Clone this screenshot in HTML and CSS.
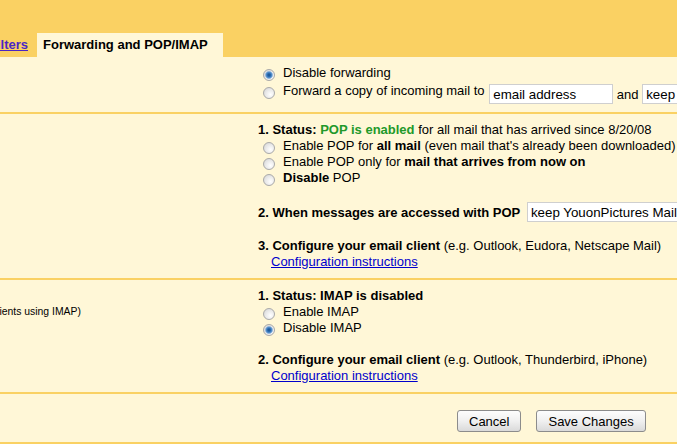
FILE: index.html
```html
<!DOCTYPE html>
<html lang="en">
<head>
<meta charset="utf-8">
<title>Settings - Forwarding and POP/IMAP</title>
<link rel="stylesheet" href="styles.css">
</head>
<body>
<div class="page">
  <nav class="tabbar">
    <a class="tab-link" href="#">Filters</a>
    <div class="tab-active">Forwarding and POP/IMAP</div>
  </nav>

  <div class="settings">
    <section class="row row-fwd">
      <div class="label"><b>Forwarding:</b></div>
      <div class="opts">
        <label class="line"><input class="radio" type="radio" name="fwd" checked><span>Disable forwarding</span></label>
        <div class="line line-field">
          <label class="inline"><input class="radio" type="radio" name="fwd"><span>Forward a copy of incoming mail to</span></label>
          <input class="field field-email" type="text" value="email address">
          and
          <select class="field field-sel"><option>keep YouonPictures Mail's copy in the Inbox</option></select>
        </div>
      </div>
    </section>

    <section class="row row-pop">
      <div class="label"><b>POP Download:</b></div>
      <div class="opts">
        <div class="block">
          <div class="line"><b>1. Status: <span class="ok">POP is enabled</span></b> for all mail that has arrived since 8/20/08</div>
          <label class="line"><input class="radio" type="radio" name="pop"><span>Enable POP for <b>all mail</b> (even mail that's already been downloaded)</span></label>
          <label class="line"><input class="radio" type="radio" name="pop"><span>Enable POP only for <b>mail that arrives from now on</b></span></label>
          <label class="line"><input class="radio" type="radio" name="pop"><span><b>Disable</b> POP</span></label>
        </div>
        <div class="block block-when">
          <div class="line line-select"><b>2. When messages are accessed with POP</b>
            <select class="field field-sel field-pop"><option>keep YouonPictures Mail's copy in the Inbox</option></select>
          </div>
        </div>
        <div class="block block-gap">
          <div class="line"><b>3. Configure your email client</b> (e.g. Outlook, Eudora, Netscape Mail)</div>
          <div class="line link-line"><a href="#">Configuration instructions</a></div>
        </div>
      </div>
    </section>

    <section class="row row-imap">
      <div class="label">
        <div class="line"><b>IMAP Access:</b></div>
        <div class="desc">(access Gmail from other clients using IMAP)</div>
      </div>
      <div class="opts">
        <div class="block">
          <div class="line"><b>1. Status: IMAP is disabled</b></div>
          <label class="line"><input class="radio" type="radio" name="imap"><span>Enable IMAP</span></label>
          <label class="line"><input class="radio" type="radio" name="imap" checked><span>Disable IMAP</span></label>
        </div>
        <div class="block block-gap">
          <div class="line"><b>2. Configure your email client</b> (e.g. Outlook, Thunderbird, iPhone)</div>
          <div class="line link-line"><a href="#">Configuration instructions</a></div>
        </div>
      </div>
    </section>

    <section class="row row-actions">
      <div class="label"></div>
      <div class="actions">
        <button class="btn" type="button">Cancel</button>
        <button class="btn" type="button">Save Changes</button>
      </div>
    </section>
  </div>
</div>
</body>
</html>
```

FILE: styles.css
```css
html, body {
  margin: 0;
  padding: 0;
}

body {
  background: #fad163;
  color: #000;
  font-family: "Liberation Sans", Arial, sans-serif;
  font-size: 13px;
  line-height: 16px;
  overflow: hidden;
  height: 444px;
}

.page {
  margin-left: -137px;
  width: 1100px;
}

/* Tabs */
.tabbar {
  display: flex;
  align-items: flex-end;
  gap: 3px;
  height: 57px;
  padding-left: 120px;
  box-sizing: border-box;
}

.tab-link {
  padding: 0 6px;
  line-height: 24px;
  font-weight: bold;
  color: #4a26c4;
  text-decoration: underline;
}

.tab-active {
  background: #fff7d7;
  font-weight: bold;
  line-height: 24px;
  height: 24px;
  width: 186px;
  box-sizing: border-box;
  padding-left: 6px;
  white-space: nowrap;
}

/* Rows */
.row {
  display: grid;
  grid-template-columns: 395px 1fr;
  background: #fff7d7;
  border-bottom: 2px solid #fad163;
  padding: 8px 0;
}

.label {
  padding-left: 10px;
}

.desc {
  font-size: 10.4px;
  line-height: 16px;
  white-space: nowrap;
}

.opts {
  white-space: nowrap;
}

.line {
  display: block;
  height: 16px;
}

label.line {
  display: flex;
  align-items: center;
}

.inline {
  display: inline-flex;
  align-items: center;
}

.line-field {
  height: auto;
  padding-top: 2px;
}

.line-select {
  height: auto;
}

.block-when {
  margin-top: 16px;
}

.block-gap {
  margin-top: 16px;
}

.ok {
  color: #22992a;
}

.link-line {
  padding-left: 13px;
}

a {
  color: #0000cc;
}

/* Radio buttons (XP-like) */
.radio {
  -webkit-appearance: none;
  appearance: none;
  box-sizing: border-box;
  width: 12px;
  height: 12px;
  margin: 3px 8px 0 5px;
  border: 1px solid #a9a9a9;
  border-radius: 50%;
  background: radial-gradient(circle at 65% 65%, #ffffff 0%, #ececec 45%, #d2d2d2 100%);
  flex: none;
}

.radio:checked {
  background:
    radial-gradient(circle at 50% 50%, #174f8a 0, #2b6bb0 1.6px, #5d95cf 3px, rgba(140, 180, 220, 0.6) 3.8px, rgba(255, 255, 255, 0) 4.3px),
    radial-gradient(circle at 65% 65%, #ffffff 0%, #ececec 45%, #d2d2d2 100%);
}

/* Fields */
.field {
  box-sizing: border-box;
  height: 20px;
  border: 1px solid #cfcfcf;
  background: #fff;
  font-family: "Liberation Sans", Arial, sans-serif;
  font-size: 13.33px;
  color: #000;
  margin: 0;
  vertical-align: baseline;
}

.field-email {
  width: 124px;
  padding: 0 3px;
  margin-left: 1px;
}

.field-sel {
  -webkit-appearance: none;
  appearance: none;
  width: 320px;
  padding: 0 3px;
  border-radius: 0;
}

.field-pop {
  margin-left: 3px;
}

/* Actions */
.row-actions {
  padding: 16px 0 10px;
}

.actions {
  display: flex;
  gap: 15px;
  padding-left: 199px;
}

.btn {
  height: 22px;
  padding: 0 11px;
  border: 1px solid #8c8c8c;
  border-radius: 3px;
  background: linear-gradient(#fdfdfd, #f0f0f0 50%, #dadada);
  font-family: "Liberation Sans", Arial, sans-serif;
  font-size: 13px;
  color: #000;
}
```
